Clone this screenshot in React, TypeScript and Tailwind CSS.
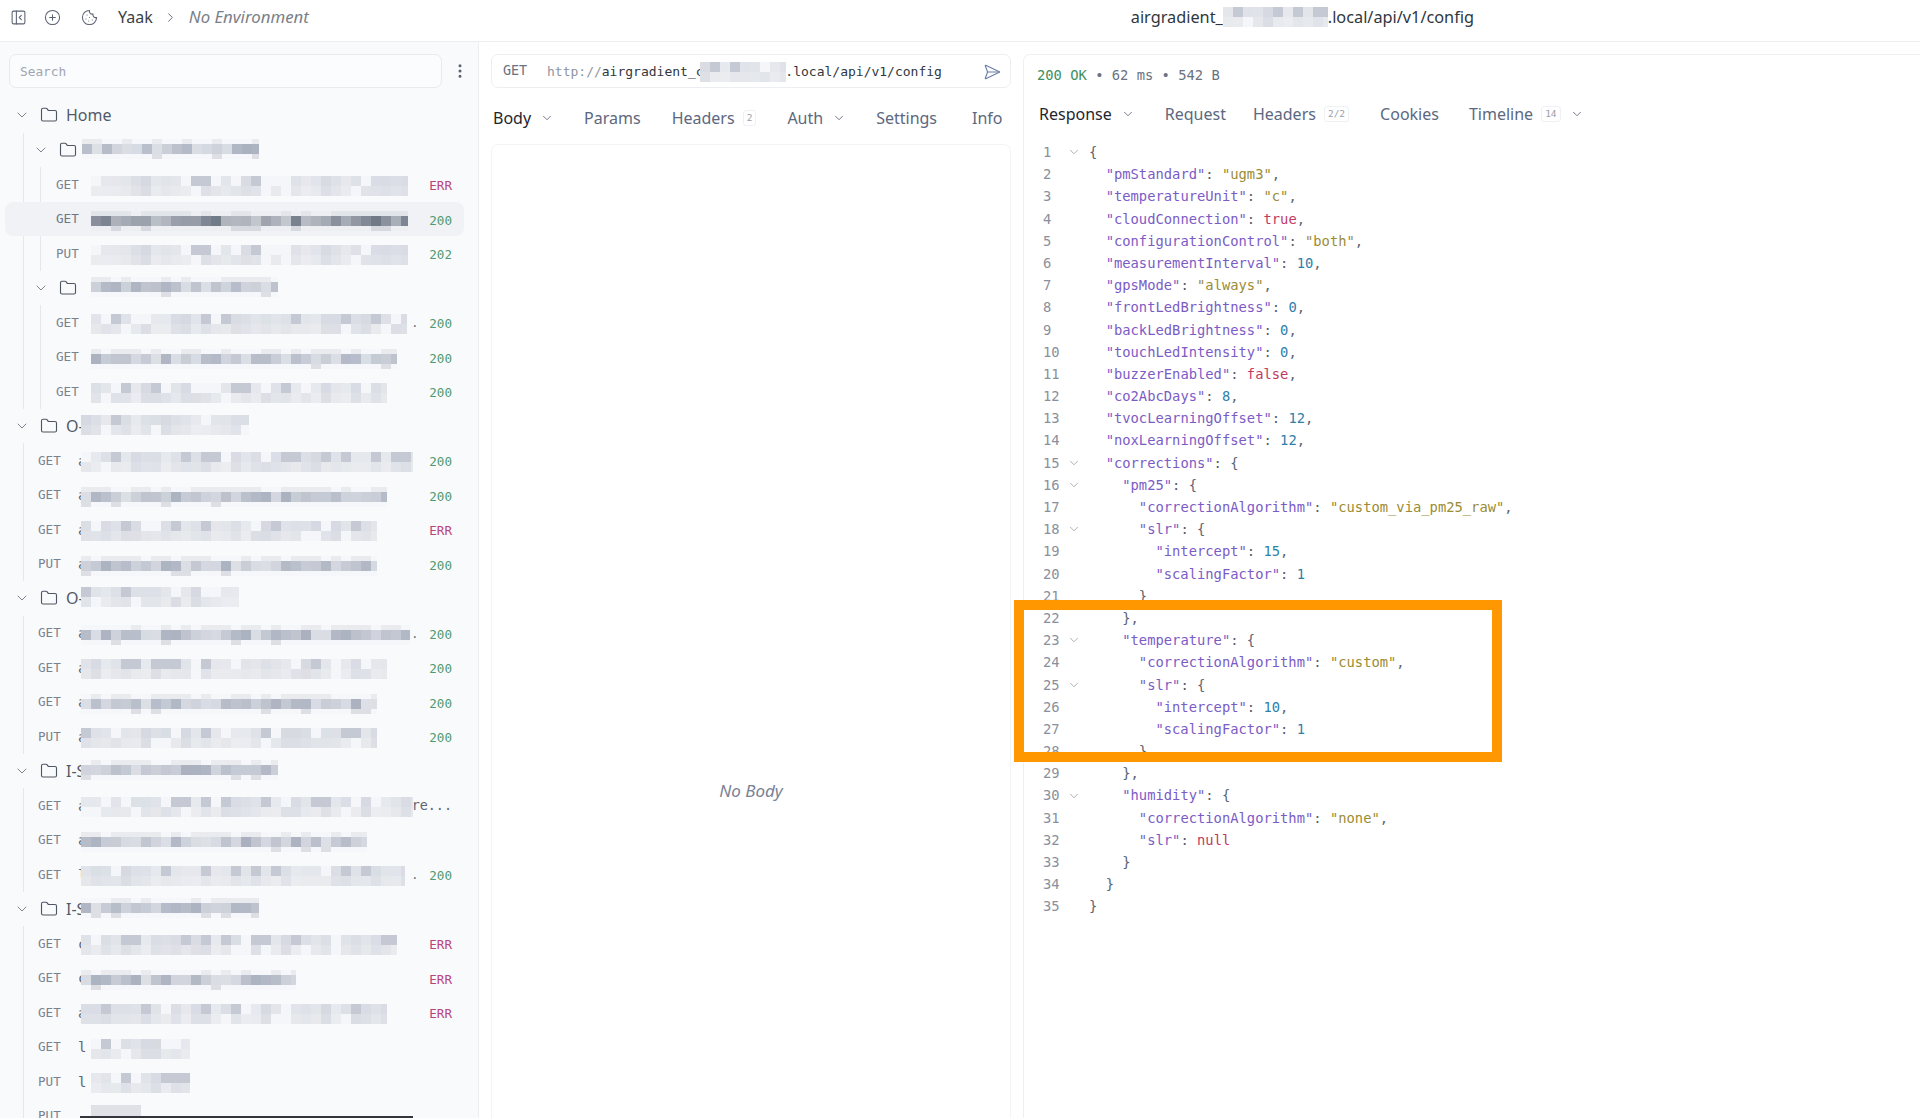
import React from "react";
import { PanelLeftClose, CirclePlus, Cookie, ChevronRight, ChevronDown, Folder, EllipsisVertical, SendHorizontal } from "lucide-react";

const MONO = "font-['DejaVu_Sans_Mono',monospace]";

function rng(seed: number) {
  let s = seed * 9301 + 49297;
  return () => {
    s = (s * 1664525 + 1013904223) % 4294967296;
    return s / 4294967296;
  };
}

type Kind = "pale" | "strip" | "sel";

function Mosaic({ w, kind, seed, className = "", style }: { w: number; kind: Kind; seed: number; className?: string; style?: React.CSSProperties }) {
  const r = rng(seed);
  const cols = Math.ceil(w / 10);
  const cells: React.ReactNode[] = [];
  for (let c = 0; c < cols; c++) {
    const x = c * 10;
    const h = r();
    const v = r();
    const z = r();
    if (kind === "pale") {
      cells.push(<rect key={`a${c}`} x={x} y={0} width={10} height={10} fill="#8b94a8" fillOpacity={h > 0.8 ? 0.48 : h > 0.12 ? 0.16 + v * 0.16 : 0.04} />);
      cells.push(<rect key={`b${c}`} x={x} y={10} width={10} height={10} fill="#9aa1b0" fillOpacity={z > 0.9 ? 0.04 : 0.14 + v * 0.18} />);
    } else {
      const dark = kind === "sel";
      cells.push(<rect key={`a${c}`} x={x} y={0} width={10} height={5} fill="#9aa1b0" fillOpacity={h > 0.45 ? 0.16 : 0.03} />);
      cells.push(<rect key={`m${c}`} x={x} y={5} width={10} height={10} fill={dark ? "#5f6878" : "#7d879c"} fillOpacity={dark ? 0.3 + v * 0.6 : 0.22 + v * 0.42} />);
      cells.push(<rect key={`b${c}`} x={x} y={15} width={10} height={5} fill="#9aa1b0" fillOpacity={z > 0.85 ? 0.3 : 0.03} />);
    }
  }
  return (
    <svg width={w} height={20} viewBox={`0 0 ${w} 20`} shapeRendering="crispEdges" className={`block blur-[0.4px] ${className}`} style={style}>
      {kind !== "sel" && <rect x={0} y={0} width={w} height={20} fill="#f9fafc" />}
      {cells}
    </svg>
  );
}

function Status({ s }: { s?: string }) {
  if (!s) return null;
  if (s === "ERR") return <span className="relative ml-auto pt-[3px] text-[#b8447c]">ERR</span>;
  return <span className="relative ml-auto pt-[3px] text-[#4f9a70]">{s}</span>;
}

type RowT = { m: string; t: string; s?: string; x: number; end: number; k: Kind; seed: number; sel?: boolean; tail?: string; dot?: boolean };

function Row({ r, base, pad }: { r: RowT; base: number; pad: string }) {
  return (
    <div className={`relative h-[34.5px] flex items-center pt-[2px] ${pad} ${MONO} text-[12.6px]`}>
      {r.sel && <div className="absolute left-[-36px] right-[-12px] top-0 bottom-0 rounded-lg bg-[#f0f2f5]" />}
      <span className={`relative w-[40px] shrink-0 ${r.sel ? "text-[#6f7786]" : "text-[#7b828f]"}`}>{r.m}</span>
      <span className="relative text-[#5f6673] text-[14px]">{r.t}</span>
      {r.tail && <span className="relative ml-auto text-[#5f6673] text-[13.4px]">{r.tail}</span>}
      <Status s={r.s} />
      <Mosaic w={r.end - r.x} kind={r.k} seed={r.seed} className="absolute top-[9px]" style={{ left: r.x - base }} />
      {r.dot && <span className="absolute text-[#6f7683] top-[9px]" style={{ left: 411 - base }}>.</span>}
    </div>
  );
}

function FolderRow({ label, x, end, k, seed, base, pad }: { label: string; x: number; end: number; k: Kind; seed: number; base: number; pad: string }) {
  return (
    <div className={`relative h-[34.5px] flex items-center ${pad} text-[#525a68] text-[16px]`}>
      <ChevronDown size={16} strokeWidth={1.5} className="text-[#7d8491] shrink-0" />
      <Folder size={18} strokeWidth={1.5} className="ml-[10px] text-[#4f5663] shrink-0" />
      <span className="ml-[8px]">{label}</span>
      {end > 0 && <Mosaic w={end - x} kind={k} seed={seed} className="absolute top-[6px]" style={{ left: x - base }} />}
    </div>
  );
}

const L2 = (rows: RowT[]) => (
  <div className="ml-[16px] border-l border-[#e5e7ec]">
    {rows.map((r, i) => <Row key={i} r={r} base={41} pad="pl-[15px]" />)}
  </div>
);

const L1 = (rows: RowT[]) => (
  <div className="ml-[23px] border-l border-[#e5e7ec]">
    {rows.map((r, i) => <Row key={i} r={r} base={24} pad="pl-[14px]" />)}
  </div>
);

function Sidebar() {
  return (
    <div className="w-[479px] shrink-0 bg-[#f9fafc] border-r border-[#eceef1] pt-[12px] overflow-hidden">
      <div className="flex items-center pl-[9px]">
        <div className={`w-[433px] h-[34px] flex items-center pl-[10px] pt-[1px] rounded-[7px] border border-[#e8eaee] bg-[#fbfcfd] text-[12.8px] text-[#a0a6b1] ${MONO}`}>Search</div>
        <EllipsisVertical size={18} strokeWidth={2} className="ml-[9px] text-[#5a6170]" />
      </div>
      <div className="mt-[10px] pr-[26px]">
        <FolderRow label="Home" x={0} end={0} k="pale" seed={0} base={0} pad="pl-[14px]" />
        <div className="ml-[23px] border-l border-[#e5e7ec]">
          <FolderRow label="" x={82} end={259} k="strip" seed={11} base={24} pad="pl-[9px]" />
          {L2([
            { m: "GET", t: "", s: "ERR", x: 91, end: 408, k: "pale", seed: 21 },
            { m: "GET", t: "", s: "200", x: 91, end: 408, k: "sel", seed: 22, sel: true },
            { m: "PUT", t: "", s: "202", x: 91, end: 408, k: "pale", seed: 21 },
          ])}
          <FolderRow label="" x={91} end={278} k="strip" seed={12} base={24} pad="pl-[9px]" />
          {L2([
            { m: "GET", t: "", s: "200", x: 91, end: 407, k: "pale", seed: 23, dot: true },
            { m: "GET", t: "", s: "200", x: 91, end: 397, k: "strip", seed: 24 },
            { m: "GET", t: "", s: "200", x: 91, end: 387, k: "pale", seed: 25 },
          ])}
        </div>
        <FolderRow label="O-" x={81} end={249} k="pale" seed={13} base={0} pad="pl-[14px]" />
        {L1([
          { m: "GET", t: "a", s: "200", x: 81, end: 413, k: "pale", seed: 31 },
          { m: "GET", t: "a", s: "200", x: 81, end: 387, k: "strip", seed: 32 },
          { m: "GET", t: "a", s: "ERR", x: 81, end: 377, k: "pale", seed: 33 },
          { m: "PUT", t: "a", s: "200", x: 81, end: 377, k: "strip", seed: 34 },
        ])}
        <FolderRow label="O-" x={81} end={239} k="pale" seed={14} base={0} pad="pl-[14px]" />
        {L1([
          { m: "GET", t: "a", s: "200", x: 81, end: 410, k: "strip", seed: 41, dot: true },
          { m: "GET", t: "a", s: "200", x: 81, end: 387, k: "pale", seed: 42 },
          { m: "GET", t: "a", s: "200", x: 81, end: 377, k: "strip", seed: 43 },
          { m: "PUT", t: "a", s: "200", x: 81, end: 377, k: "pale", seed: 44 },
        ])}
        <FolderRow label="I-S" x={81} end={278} k="strip" seed={15} base={0} pad="pl-[14px]" />
        {L1([
          { m: "GET", t: "a", tail: "urre...", x: 81, end: 413, k: "pale", seed: 51 },
          { m: "GET", t: "a", x: 81, end: 367, k: "strip", seed: 52 },
          { m: "GET", t: "l", s: "200", x: 81, end: 405, k: "pale", seed: 53, dot: true },
        ])}
        <FolderRow label="I-S" x={81} end={259} k="strip" seed={16} base={0} pad="pl-[14px]" />
        {L1([
          { m: "GET", t: "c", s: "ERR", x: 81, end: 397, k: "pale", seed: 61 },
          { m: "GET", t: "c", s: "ERR", x: 81, end: 296, k: "strip", seed: 62 },
          { m: "GET", t: "a", s: "ERR", x: 81, end: 387, k: "pale", seed: 63 },
          { m: "GET", t: "l", x: 91, end: 190, k: "pale", seed: 64 },
          { m: "PUT", t: "l", x: 91, end: 190, k: "pale", seed: 65 },
        ])}
        <div className="ml-[23px] border-l border-[#e5e7ec]">
          <div className={`relative h-[34.5px] flex items-center pt-[2px] pl-[14px] ${MONO} text-[12.6px] text-[#7b828f]`}>
            PUT
            <div className="absolute left-[67px] top-[6px] w-[50px] h-[12px] bg-[#dfe1e7]" />
            <div className="absolute left-[56px] top-[17px] w-[333px] h-[2px] bg-[#33363c]" />
          </div>
        </div>
      </div>
    </div>
  );
}

function Tab({ label, active, chev, badge, className = "" }: { label: string; active?: boolean; chev?: boolean; badge?: string; className?: string }) {
  return (
    <div className={`flex items-center text-[16px] ${active ? "text-[#1f2630]" : "text-[#5c6880]"} ${className}`}>
      <span>{label}</span>
      {badge && <span className={`ml-[8px] px-[3px] rounded-[3px] border border-[#eef0f3] text-[9.5px] leading-[14px] text-[#9aa0ab] ${MONO}`}>{badge}</span>}
      {chev && <ChevronDown size={14} strokeWidth={1.6} className="ml-[9px] text-[#6b7280]" />}
    </div>
  );
}

function Middle() {
  return (
    <div className="w-[544px] shrink-0 pt-[12px] pl-[12px] pr-[12px] flex flex-col">
      <div className={`h-[34px] w-[520px] flex items-center rounded-[7px] border border-[#eceef1] pl-[11px] pr-[9px] pt-[1px] text-[13px] ${MONO}`}>
        <span className="w-[44px] text-[#6b7280] text-[13.4px]">GET</span>
        <span className="text-[#8d94a0]">http://</span>
        <span className="text-[#2f3640]">airgradient_c</span>
        <Mosaic w={86} kind="pale" seed={71} className="relative z-10 -ml-[4px] shrink-0" />
        <span className="text-[#2f3640] -ml-[8px]">).local/api/v1/config</span>
        <SendHorizontal size={18} strokeWidth={1.5} className="ml-auto text-[#6b7da8]" />
      </div>
      <div className="mt-[13px] h-[34px] flex items-center pl-[2px]">
        <Tab label="Body" active chev />
        <Tab label="Params" className="ml-[30px]" />
        <Tab label="Headers" badge="2" className="ml-[31px]" />
        <Tab label="Auth" chev className="ml-[31px]" />
        <Tab label="Settings" className="ml-[30px]" />
        <Tab label="Info" className="ml-[35px]" />
      </div>
      <div className="mt-[9px] w-[520px] grow rounded-t-[7px] border border-b-0 border-[#f3f4f6] flex flex-col items-center pt-[633px] italic text-[17px] text-[#7a8296]">
        No Body
      </div>
    </div>
  );
}

const JSON_LINES: [number, string, boolean?][] = [
  [0, "{", true],
  [2, '"pmStandard": "ugm3",'],
  [2, '"temperatureUnit": "c",'],
  [2, '"cloudConnection": true,'],
  [2, '"configurationControl": "both",'],
  [2, '"measurementInterval": 10,'],
  [2, '"gpsMode": "always",'],
  [2, '"frontLedBrightness": 0,'],
  [2, '"backLedBrightness": 0,'],
  [2, '"touchLedIntensity": 0,'],
  [2, '"buzzerEnabled": false,'],
  [2, '"co2AbcDays": 8,'],
  [2, '"tvocLearningOffset": 12,'],
  [2, '"noxLearningOffset": 12,'],
  [2, '"corrections": {', true],
  [4, '"pm25": {', true],
  [6, '"correctionAlgorithm": "custom_via_pm25_raw",'],
  [6, '"slr": {', true],
  [8, '"intercept": 15,'],
  [8, '"scalingFactor": 1'],
  [6, "}"],
  [4, "},"],
  [4, '"temperature": {', true],
  [6, '"correctionAlgorithm": "custom",'],
  [6, '"slr": {', true],
  [8, '"intercept": 10,'],
  [8, '"scalingFactor": 1'],
  [6, "}"],
  [4, "},"],
  [4, '"humidity": {', true],
  [6, '"correctionAlgorithm": "none",'],
  [6, '"slr": null'],
  [4, "}"],
  [2, "}"],
  [0, "}"],
];

function tokens(text: string) {
  const out: React.ReactNode[] = [];
  const re = /("[^"]*")(:)?|true|false|null|\d+|[{}:,]|\s+/g;
  let m: RegExpExecArray | null;
  let i = 0;
  while ((m = re.exec(text))) {
    const t = m[0];
    if (m[1]) {
      if (m[2]) {
        out.push(<span key={i++} className="text-[#7b5cc6]">{m[1]}</span>);
        out.push(<span key={i++} className="text-[#555d6b]">:</span>);
      } else {
        out.push(<span key={i++} className="text-[#9a8c35]">{t}</span>);
      }
    } else if (t === "true" || t === "false" || t === "null") {
      out.push(<span key={i++} className="text-[#c03a62]">{t}</span>);
    } else if (/^\d/.test(t)) {
      out.push(<span key={i++} className="text-[#2f80aa]">{t}</span>);
    } else {
      out.push(<span key={i++} className="text-[#5b6472]">{t}</span>);
    }
  }
  return out;
}

function Response() {
  return (
    <div className="grow pl-[13px] mt-[12px] border-l border-t border-[#eef0f3] rounded-tl-[7px] min-w-0">
      <div className={`mt-[9px] h-[22px] flex items-center text-[13.8px] ${MONO} text-[#6b7280] whitespace-pre`}>
        <span className="text-[#3f8f60]">200 OK</span>
        <span> • 62 ms • 542 B</span>
      </div>
      <div className="mt-[11px] h-[34px] flex items-center pl-[2px]">
        <Tab label="Response" active chev />
        <Tab label="Request" className="ml-[30px]" />
        <Tab label="Headers" badge="2/2" className="ml-[27px]" />
        <Tab label="Cookies" className="ml-[31px]" />
        <Tab label="Timeline" badge="14" chev className="ml-[30px]" />
      </div>
      <div className={`mt-[10px] text-[13.8px] ${MONO}`}>
        {JSON_LINES.map(([ind, text, fold], i) => (
          <div key={i} className="h-[22.2px] leading-[22.2px] flex items-center whitespace-pre">
            <span className="w-[30px] pl-[6px] shrink-0 text-[13.8px] text-[#8a909b]">{i + 1}</span>
            <span className="w-[22px] shrink-0 flex items-center">
              {fold && <ChevronDown size={14} strokeWidth={1.3} className="text-[#8f96a2]" />}
            </span>
            <span>{" ".repeat(ind)}{tokens(text)}</span>
          </div>
        ))}
      </div>
    </div>
  );
}

export default function App() {
  return (
    <div className="relative h-[1118px] w-[1920px] overflow-hidden bg-white flex flex-col font-['Noto_Sans',sans-serif]">
      <header className="h-[42px] shrink-0 border-b border-[#eceef1] flex items-center pl-[10px] pb-[7px]">
        <PanelLeftClose size={17} strokeWidth={1.5} className="text-[#5a6272]" />
        <CirclePlus size={17} strokeWidth={1.5} className="ml-[17px] text-[#5a6272]" />
        <Cookie size={17} strokeWidth={1.5} className="ml-[20px] text-[#5a6272]" />
        <span className="ml-[20px] text-[16px] text-[#3a3f47]">Yaak</span>
        <ChevronRight size={15} strokeWidth={1.6} className="ml-[10px] text-[#6b7280]" />
        <span className="ml-[11px] text-[16.8px] italic text-[#7a7f88]">No Environment</span>
        <div className="ml-auto mr-[446px] flex items-center text-[16.3px] text-[#2f3640]">
          <span>airgradient_</span>
          <Mosaic w={105} kind="pale" seed={81} className="shrink-0" />
          <span>.local/api/v1/config</span>
        </div>
      </header>
      <div className="flex grow min-h-0">
        <Sidebar />
        <Middle />
        <Response />
      </div>
      <div className="absolute left-[1014px] top-[600px] w-[488px] h-[162px] border-[10px] border-[#ff9800]" />
    </div>
  );
}
